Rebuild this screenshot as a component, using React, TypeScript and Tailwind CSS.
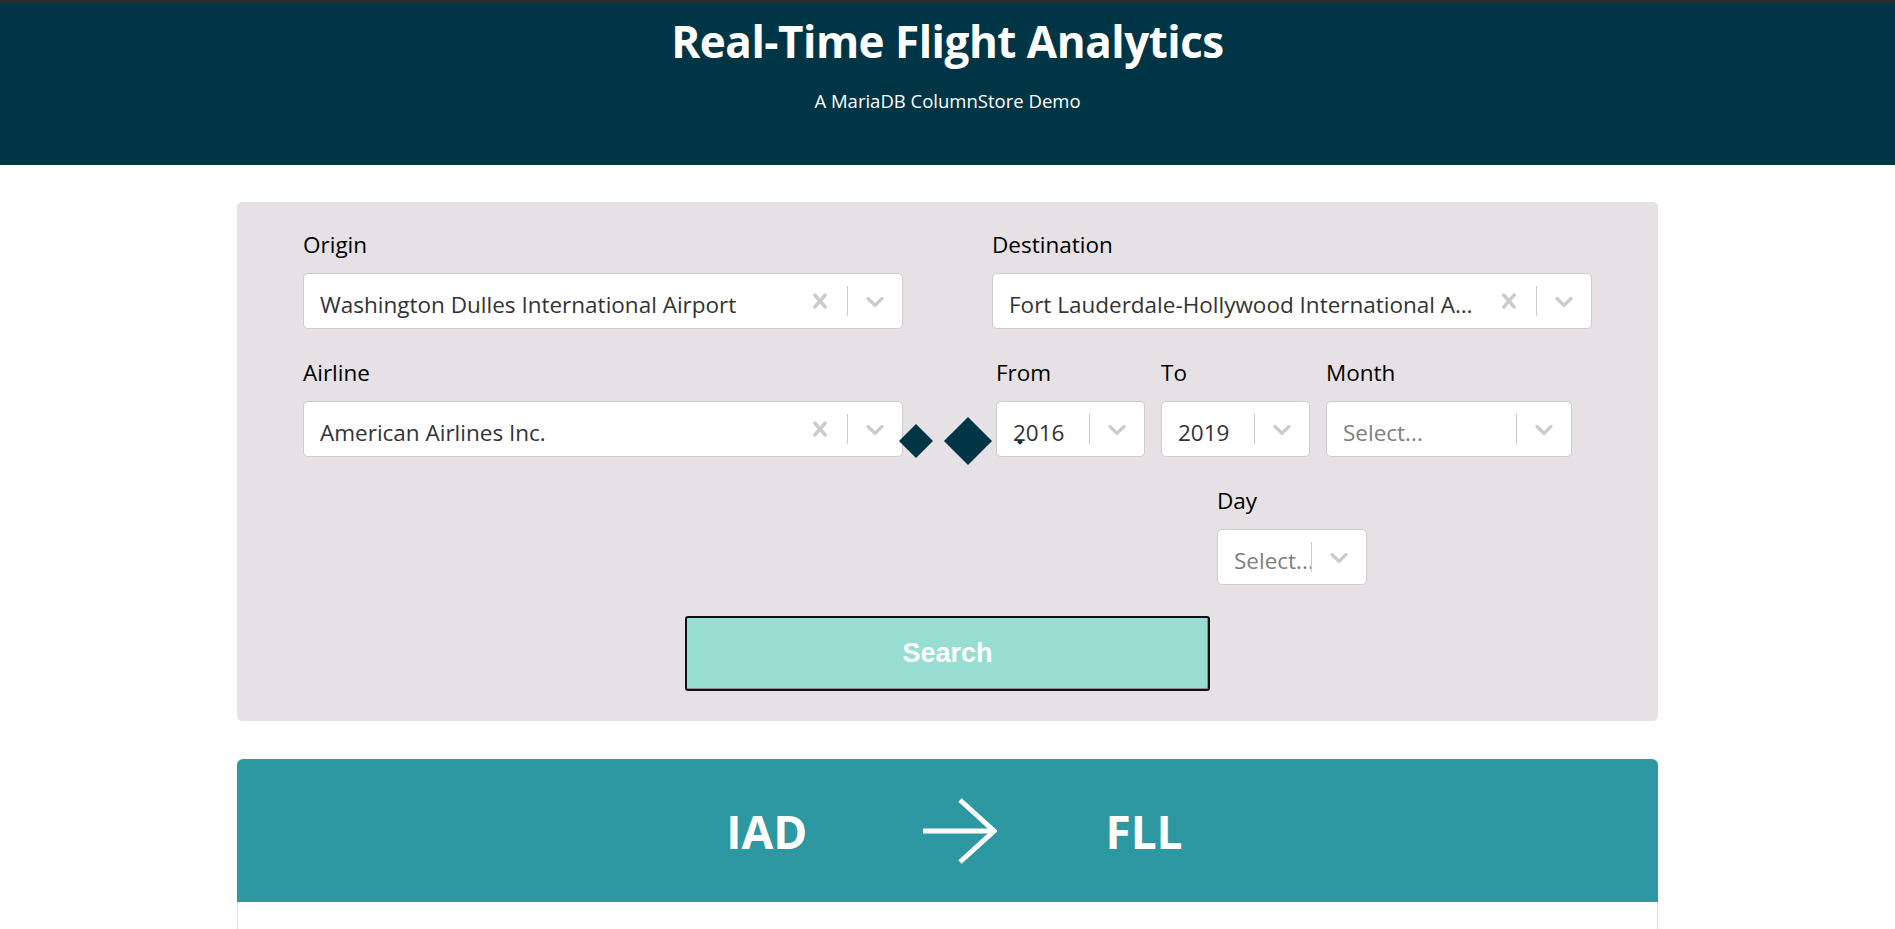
import React from "react";

const CrossIcon: React.FC = () => (
  <svg viewBox="0 0 20 20" className="h-[30px] w-[30px] fill-[#cccccc]">
    <path d="M14.348 14.849c-0.469 0.469-1.229 0.469-1.697 0l-2.651-3.030-2.651 3.029c-0.469 0.469-1.229 0.469-1.697 0-0.469-0.469-0.469-1.229 0-1.697l2.758-3.15-2.759-3.152c-0.469-0.469-0.469-1.228 0-1.697s1.228-0.469 1.697 0l2.652 3.031 2.651-3.031c0.469-0.469 1.228-0.469 1.697 0s0.469 1.229 0 1.697l-2.758 3.152 2.758 3.15c0.469 0.469 0.469 1.229 0 1.698z" />
  </svg>
);

const ChevronIcon: React.FC = () => (
  <svg viewBox="0 0 20 20" className="h-[30px] w-[30px] fill-[#cccccc]">
    <path d="M4.516 7.548c0.436-0.446 1.043-0.481 1.576 0l3.908 3.747 3.908-3.747c0.533-0.481 1.141-0.446 1.574 0 0.436 0.445 0.408 1.197 0 1.615-0.406 0.418-4.695 4.502-4.695 4.502-0.217 0.223-0.502 0.335-0.787 0.335s-0.57-0.112-0.789-0.335c0 0-4.287-4.084-4.695-4.502s-0.436-1.17 0-1.615z" />
  </svg>
);

type SelectProps = { value?: string; clearable?: boolean };

const Select: React.FC<SelectProps> = ({ value, clearable }) => (
  <div className="flex h-[56px] items-center rounded-[5px] border border-[#cccccc] bg-white">
    <div
      className={
        value
          ? "min-w-0 flex-1 truncate pl-[16px] pr-2 pt-[8px] text-[22.5px] text-[#333333]"
          : "min-w-0 flex-1 overflow-hidden whitespace-nowrap pl-[16px] pt-[8px] text-[22.5px] text-[#808080]"
      }
    >
      {value ?? "Select..."}
    </div>
    {clearable && (
      <div className="flex px-3">
        <CrossIcon />
      </div>
    )}
    <span className="h-[30px] w-px shrink-0 bg-[#cccccc]" />
    <div className="flex px-3">
      <ChevronIcon />
    </div>
  </div>
);

const Field: React.FC<{ label: string; children: React.ReactNode; className?: string }> = ({
  label,
  children,
  className,
}) => (
  <div className={className}>
    <div className="mb-[14px] text-[22.5px] leading-[29px] text-black">{label}</div>
    {children}
  </div>
);

const App: React.FC = () => {
  return (
    <div className="min-h-screen w-full bg-white font-['Open_Sans',sans-serif]">
      <header className="flex h-[165px] flex-col items-center border-t-[3px] border-[#2d2d2d] bg-[#003545] pt-[16px] text-white">
        <h1 className="text-[44px] font-bold leading-none tracking-[-0.5px]">Real-Time Flight Analytics</h1>
        <p className="mt-[29px] text-[18.5px] leading-none">A MariaDB ColumnStore Demo</p>
      </header>

      <div className="mx-auto w-[1421px] pt-[37px]">
        <div className="relative rounded-[5px] bg-[#e6e1e5] px-[66px] pb-[30px] pt-[28px]">
          <div className="grid grid-cols-2 gap-x-[89px] gap-y-[29px]">
            <Field label="Origin">
              <Select value="Washington Dulles International Airport" clearable />
            </Field>
            <Field label="Destination">
              <Select value="Fort Lauderdale-Hollywood International Airport" clearable />
            </Field>
            <Field label="Airline">
              <Select value="American Airlines Inc." clearable />
            </Field>
            <div className="flex flex-col gap-y-[29px]">
              <div className="flex gap-x-[16px] pl-[4px]">
                <Field label="From" className="w-[149px]">
                  <Select value="2016" />
                </Field>
                <Field label="To" className="w-[149px]">
                  <Select value="2019" />
                </Field>
                <Field label="Month" className="w-[246px]">
                  <Select />
                </Field>
              </div>
              <div className="flex justify-center">
                <Field label="Day" className="w-[150px]">
                  <Select />
                </Field>
              </div>
            </div>
          </div>

          <div className="mt-[31px] flex justify-center">
            <button className="h-[75px] w-[525px] rounded-[3px] border-2 border-[#111111] bg-[#97ddd1] font-['Liberation_Sans',Arial,sans-serif] text-[27px] font-bold text-white shadow-[inset_-1px_-1px_0_#8a8a8a]">
              Search
            </button>
          </div>

          {/* loader diamonds drawn over the form */}
          <span className="absolute left-[667px] top-[227px] h-[24px] w-[24px] rotate-45 bg-[#003545]" />
          <span className="absolute left-[714px] top-[222px] h-[34px] w-[34px] rotate-45 bg-[#003545]" />
          <span className="absolute left-[781px] top-[238px] h-[4px] w-[4px] rotate-45 bg-[#003545]" />
        </div>

        <div className="mt-[38px]">
          <div className="flex h-[143px] items-center justify-center rounded-t-[6px] bg-[#2e98a2] pl-[14px] text-white">
            <span className="mr-[116px] text-[46px] font-bold leading-none">IAD</span>
            <svg width="74" height="66" viewBox="0 0 74 66" fill="none" stroke="white" strokeWidth="5">
              <path d="M0 33H70" />
              <path d="M37 2L71 33L37 64" />
            </svg>
            <span className="ml-[108px] text-[46px] font-bold leading-none">FLL</span>
          </div>
          <div className="h-[80px] rounded-b-[6px] border border-t-0 border-[#e3e3e3] bg-white" />
        </div>
      </div>
    </div>
  );
};

export default App;
